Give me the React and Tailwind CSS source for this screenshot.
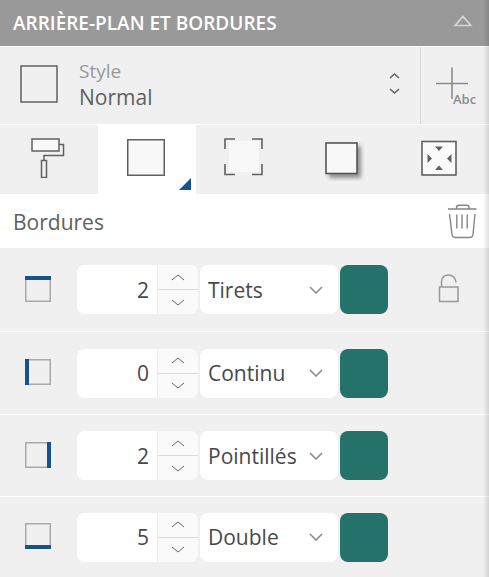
import React from 'react';

const EDGES = [
  { id: 'top', label: 'Bordure supérieure', width: 2, style: 'Tirets', height: 'h-[84px]', bar: [0, 0, 26, 4] },
  { id: 'left', label: 'Bordure gauche', width: 0, style: 'Continu', height: 'h-[83px]', bar: [0, 0, 4, 26] },
  { id: 'right', label: 'Bordure droite', width: 2, style: 'Pointillés', height: 'h-[82px]', bar: [22, 0, 4, 26] },
  { id: 'bottom', label: 'Bordure inférieure', width: 5, style: 'Double', height: 'h-[80px]', bar: [0, 22, 26, 4] },
];

const STYLES = ['Continu', 'Tirets', 'Pointillés', 'Double'];

function EdgeIcon({ bar }) {
  const [x, y, w, h] = bar;
  return (
    <svg width="26" height="26" viewBox="0 0 26 26" aria-hidden="true">
      <rect x="0.75" y="0.75" width="24.5" height="24.5" fill="none" stroke="#aaaaaa" strokeWidth="1.5" />
      <rect x={x} y={y} width={w} height={h} fill="#17528f" />
    </svg>
  );
}

function Chevron({ up, className, w = 12, h = 5, stroke = '#666', strokeWidth = 1 }) {
  const d = up ? `M1 ${h + 1}L${w / 2 + 1} 1L${w + 1} ${h + 1}` : `M1 1L${w / 2 + 1} ${h + 1}L${w + 1} 1`;
  return (
    <svg className={className} width={w + 2} height={h + 2} viewBox={`0 0 ${w + 2} ${h + 2}`} aria-hidden="true">
      <path d={d} fill="none" stroke={stroke} strokeWidth={strokeWidth} />
    </svg>
  );
}

function RollerIcon() {
  return (
    <svg width="36" height="40" viewBox="0 0 36 40" fill="none" stroke="#606060" strokeWidth="1.5" aria-hidden="true">
      <rect x="1" y="1" width="27" height="12" fill="#f8f8f8" />
      <path d="M28 6.5H32.5V17.5H13V22" />
      <rect x="10.5" y="22.5" width="5" height="17" />
    </svg>
  );
}

function BorderIcon() {
  return (
    <svg width="40" height="38" viewBox="0 0 40 38" aria-hidden="true">
      <rect x="0.75" y="0.75" width="36.5" height="35.5" fill="#f8f8f8" stroke="#606060" strokeWidth="1.5" />
    </svg>
  );
}

function CornersIcon() {
  return (
    <svg width="40" height="39" viewBox="0 0 40 39" aria-hidden="true">
      <rect x="5" y="3" width="30" height="31" fill="#f8f8f8" />
      <path d="M1 11V1H11M28 1H38V11M1 26V36.5H11M28 36.5H38V26" fill="none" stroke="#606060" strokeWidth="1.6" />
    </svg>
  );
}

function ShadowIcon() {
  return (
    <svg width="46" height="46" viewBox="0 0 46 46" aria-hidden="true">
      <defs>
        <filter id="soft" x="-20%" y="-20%" width="140%" height="140%">
          <feGaussianBlur stdDeviation="1.9" />
        </filter>
      </defs>
      <rect x="10" y="11" width="32" height="32" fill="#777" filter="url(#soft)" opacity="0.8" />
      <rect x="7" y="8" width="31" height="30.5" fill="#f8f8f8" stroke="#555" strokeWidth="1.6" />
    </svg>
  );
}

function MarginIcon() {
  return (
    <svg width="38" height="36" viewBox="0 0 38 36" aria-hidden="true">
      <rect x="1" y="1.5" width="34" height="33.5" fill="#fafafa" stroke="#606060" strokeWidth="1.6" />
      <path d="M14 6.5H22L18 11ZM14 30H22L18 25.5ZM6.5 14V23L11 18.5ZM30.5 14V23L26 18.5Z" fill="#606060" />
    </svg>
  );
}

function TrashIcon() {
  return (
    <svg width="30" height="35" viewBox="0 0 30 35" fill="none" stroke="#858585" strokeWidth="1.4" aria-hidden="true">
      <path d="M1 5H29.5M9.5 5V3.5Q9.5 1.2 12 1.2H19.5Q22 1.2 22 3.5V5" />
      <path d="M2.5 10L5 30.5Q5.5 33.500 8 33.5H23Q25.5 33.5 26 30.5L28 10M9.8 10.5V24.5M15 10.5V24.5M20.2 10.5V24.5" />
    </svg>
  );
}

function UnlockIcon() {
  return (
    <svg width="22" height="30" viewBox="0 0 22 30" fill="none" stroke="#999" strokeWidth="1.5" aria-hidden="true">
      <rect x="1.5" y="13" width="18.5" height="14.5" />
      <path d="M3.5 13V7.5Q4 1 10.500 1Q17 1 18 8.5" />
    </svg>
  );
}

const TABS = [
  { label: 'Arrière-plan', Icon: RollerIcon },
  { label: 'Bordures', Icon: BorderIcon, active: true },
  { label: 'Coins', Icon: CornersIcon },
  { label: 'Ombre', Icon: ShadowIcon },
  { label: 'Marges', Icon: MarginIcon },
];

function EdgeRow({ edge, lock }) {
  return (
    <div className={`flex items-center border-b border-white last:border-b-0 ${edge.height}`}>
      <div className="flex w-[77px] shrink-0 pb-0.5 pl-[25px]">
        <EdgeIcon bar={edge.bar} />
      </div>
      <div className="flex h-[49px] min-w-0 flex-1 gap-0.5">
        <div className="flex w-[121px] shrink-0 overflow-hidden rounded-lg bg-white">
          <input
            type="text"
            inputMode="numeric"
            defaultValue={edge.width}
            aria-label={`${edge.label} : épaisseur`}
            className="w-20 bg-white pt-0.5 pr-2 text-right text-[21px] text-[#484848] outline-none"
          />
          <div className="flex flex-1 flex-col border-l border-[#ededed] bg-[#fafafa]">
            <button type="button" aria-label="Augmenter" className="flex flex-1 items-center justify-center border-b border-[#dadada]">
              <Chevron up />
            </button>
            <button type="button" aria-label="Diminuer" className="flex flex-1 items-center justify-center">
              <Chevron />
            </button>
          </div>
        </div>
        <div className="relative min-w-0 flex-1">
          <select
            defaultValue={edge.style}
            aria-label={`${edge.label} : style`}
            className="h-full w-full appearance-none rounded-lg bg-white pt-0.5 pl-2 text-[21px] text-[#484848] outline-none"
          >
            {STYLES.map((s) => (
              <option key={s}>{s}</option>
            ))}
          </select>
          <Chevron className="pointer-events-none absolute top-1/2 right-[15px] -translate-y-1/2" h={6} stroke="#8c8c8c" strokeWidth={1.6} />
        </div>
        <button type="button" aria-label={`${edge.label} : couleur`} className="w-12 shrink-0 rounded-lg bg-[#24726a]" />
      </div>
      <div className="flex w-[101px] shrink-0 justify-center pb-0.5 pl-5">
        {lock && (
          <button type="button" aria-label="Déverrouiller">
            <UnlockIcon />
          </button>
        )}
      </div>
    </div>
  );
}

export default function App() {
  return (
    <section className="relative bg-[#f0f0f0] font-['Open_Sans','Noto_Sans',sans-serif] text-[#606060]">
      <header className="flex h-[47px] items-center justify-between border-b border-white bg-[#999] pr-4 pl-[13px]">
        <h1 className="text-[19px] font-semibold text-white">ARRIÈRE-PLAN ET BORDURES</h1>
        <button type="button" aria-label="Réduire" className="pb-1">
          <svg width="20" height="12" viewBox="0 0 20 12" aria-hidden="true">
            <path d="M2 10.5L10 1.500L18 10.5Z" fill="none" stroke="#d8d8d8" strokeWidth="1.5" />
          </svg>
        </button>
      </header>

      <div className="flex h-[78px] border-b border-white">
        <button type="button" className="flex flex-1 items-center pr-5 pb-1 pl-5 text-left">
          <svg width="38" height="38" viewBox="0 0 38 38" aria-hidden="true">
            <rect x="1" y="1" width="36" height="36" fill="none" stroke="#606060" strokeWidth="1.5" />
          </svg>
          <span className="flex flex-1 flex-col pl-[21px]">
            <span className="text-[19px] leading-[26px] text-[#999]">Style</span>
            <span className="text-[21px] leading-[26px]">Normal</span>
          </span>
          <span className="flex flex-col gap-[9px]">
            <Chevron up w={9} h={4} strokeWidth={1.6} />
            <Chevron w={9} h={4} strokeWidth={1.6} />
          </span>
        </button>
        <button type="button" aria-label="Nouveau style" className="flex w-[69px] items-center justify-center border-l border-[#d8d8d8] pl-1">
          <svg width="46" height="42" viewBox="0 0 46 42" aria-hidden="true">
            <path d="M2 18.5H34M18 2.500V34" fill="none" stroke="#8c8c8c" strokeWidth="1.6" />
            <text x="19" y="39" fontSize="13" fontWeight="600" fill="#8c8c8c">Abc</text>
          </svg>
        </button>
      </div>

      <div role="tablist" className="grid h-[69px] grid-cols-5">
        {TABS.map(({ label, Icon, active }) => (
          <button
            key={label}
            type="button"
            role="tab"
            aria-label={label}
            aria-selected={!!active}
            className={`relative flex items-center justify-center pb-1 ${active ? 'bg-white' : ''}`}
          >
            <Icon />
            {active && (
              <svg className="absolute right-[5px] bottom-1" width="12" height="12" viewBox="0 0 12 12" aria-hidden="true">
                <path d="M12 0V12H0Z" fill="#17528f" />
              </svg>
            )}
          </button>
        ))}
      </div>

      <div className="flex h-[54px] items-center justify-between bg-white pr-3 pl-[13px]">
        <h2 className="pt-1 text-[21px]">Bordures</h2>
        <button type="button" aria-label="Supprimer les bordures">
          <TrashIcon />
        </button>
      </div>

      <div>
        {EDGES.map((edge, i) => (
          <EdgeRow key={edge.id} edge={edge} lock={i === 0} />
        ))}
      </div>

      <div className="pointer-events-none absolute inset-y-0 right-0 w-1.5 bg-linear-to-l from-black/12 to-transparent" />
    </section>
  );
}
